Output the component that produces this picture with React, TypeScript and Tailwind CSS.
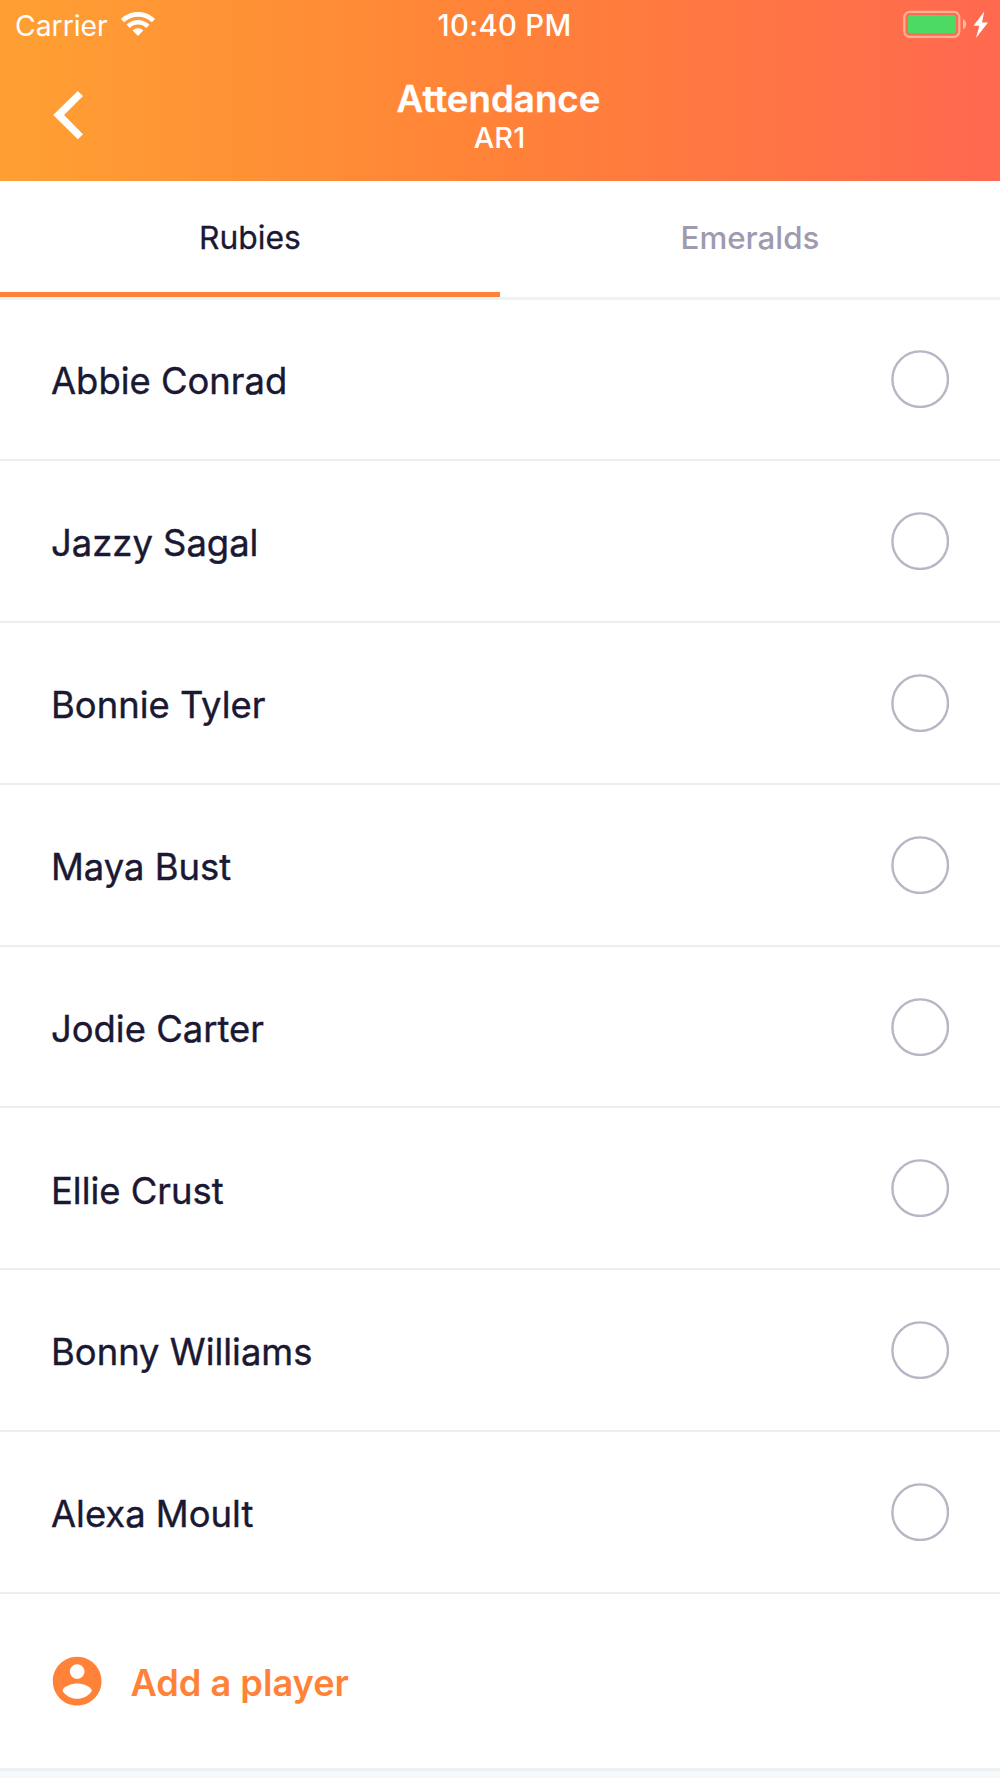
import { useState } from "react"

interface TabProps {
  label: string
  active: boolean
  onSelect: () => void
}

interface PlayerRowProps {
  name: string
  checked: boolean
  onToggle: () => void
}

const PLAYERS = [
  "Abbie Conrad",
  "Jazzy Sagal",
  "Bonnie Tyler",
  "Maya Bust",
  "Jodie Carter",
  "Ellie Crust",
  "Bonny Williams",
  "Alexa Moult",
]

const TEAMS = ["Rubies", "Emeralds"]

function WifiIcon() {
  return (
    <svg className="w-[34px] h-[24px]" viewBox="0 0 34 24" fill="white">
      <path d="M0 6.9C4.6 2.6 10.500 0 17 0s12.400 2.600 17 6.900L30.900 10.200C27.200 6.700 22.300 4.700 17 4.700S6.800 6.700 3.100 10.200z" />
      <path d="M5.500 12.500C8.500 9.600 12.600 7.900 17 7.900s8.500 1.700 11.500 4.600l-3.200 3.400C23.100 13.800 20.200 12.600 17 12.600s-6.100 1.200-8.300 3.300z" />
      <path d="M17 24l-5.300-5.500c1.300-1.500 3.200-2.300 5.300-2.300s4 .8 5.300 2.300z" />
    </svg>
  )
}

function BatteryIcon() {
  return (
    <svg className="w-[86px] h-[28px]" viewBox="0 0 86 28">
      <rect x="1.300" y="1.900" width="55" height="25" rx="5.500" fill="none" stroke="white" strokeOpacity="0.450" strokeWidth="2.200" />
      <rect x="5" y="5" width="48" height="18.500" rx="2.500" fill="#4cd964" />
      <path d="M60 9.300c4.200 1.700 4.200 8.300 0 10z" fill="white" fillOpacity="0.500" />
      <path d="M81.300 1.500L70.500 15.800h5.800L73 28 85 12.500h-6z" fill="white" />
    </svg>
  )
}

function StatusBar() {
  return (
    <div className="grid grid-cols-3 h-[50px] px-[14px] text-[29.3px] leading-[51px] text-white">
      <div className="flex items-start">
        <span className="w-[107px] pl-px text-[28.3px] leading-[52px]">Carrier</span>
        <span className="pt-[12px]">
          <WifiIcon />
        </span>
      </div>
      <span className="pl-[9px] text-center font-medium tracking-[0.3px]">10:40 PM</span>
      <div className="flex justify-end pt-[10px] -mr-[3px]">
        <BatteryIcon />
      </div>
    </div>
  )
}

function Header() {
  return (
    <header className="h-[181px] bg-linear-to-r/srgb from-[#ffa033] via-[#ff8238] to-[#ff6950]">
      <StatusBar />
      <div className="grid grid-cols-[1fr_auto_1fr] h-[131px]">
        <button className="flex items-start pl-[52px] pt-[40px]" aria-label="Back">
          <svg className="w-[32px] h-[50px]" viewBox="0 0 32 50" fill="white">
            <path d="M25.800 1L31 6 12 25l19 19.200-5.200 5L1.200 25z" />
          </svg>
        </button>
        <div className="flex flex-col items-center pt-[27px] pr-[3px] text-white">
          <h1 className="text-[36.700px] leading-[44px] font-semibold [-webkit-text-stroke:0.3px]">Attendance</h1>
          <p className="pl-[2px] text-[29px] leading-[34px] font-medium">AR1</p>
        </div>
        <div />
      </div>
    </header>
  )
}

function Tab({ label, active, onSelect }: TabProps) {
  return (
    <button
      onClick={onSelect}
      className={`h-[116px] pt-[3px] border-b-[5px] ${
        active
          ? "border-[#ff8238] text-[#1a1833] text-[31.800px] [-webkit-text-stroke:0.3px]"
          : "border-transparent text-[#9e9bb0] text-[31.300px] font-medium"
      }`}
    >
      {label}
    </button>
  )
}

function PlayerRow({ name, checked, onToggle }: PlayerRowProps) {
  return (
    <li className="h-[161.900px] border-b-2 border-[#e9eff2]">
      <button
        onClick={onToggle}
        className="flex w-full h-full items-center justify-between pl-[51px] pr-[51px] text-[36.400px] text-[#1a1833]"
      >
        <span className="pt-[5px] [-webkit-text-stroke:0.4px]">{name}</span>
        <svg className="size-[58px]" viewBox="0 0 58 58">
          <circle cx="29.200" cy="29.200" r="27.800" fill={checked ? "#ff8238" : "none"} stroke="#b8b5c4" strokeWidth="2.400" />
        </svg>
      </button>
    </li>
  )
}

function AddPlayer() {
  return (
    <button className="flex w-full h-[177px] items-center gap-[24px] pl-[48px] border-b-[3px] border-[#ebf0f3] text-[#ff8238]">
      <svg className="size-[58.400px]" viewBox="0 0 24 24" fill="currentColor">
        <path d="M12 2C6.480 2 2 6.480 2 12s4.480 10 10 10 10-4.480 10-10S17.520 2 12 2zm0 3c1.660 0 3 1.340 3 3s-1.340 3-3 3-3-1.340-3-3 1.340-3 3-3zm0 14.200c-2.500 0-4.710-1.280-6-3.220.03-1.990 4-3.080 6-3.080 1.990 0 5.970 1.090 6 3.080-1.290 1.940-3.500 3.220-6 3.220z" />
      </svg>
      <span className="pt-[4px] text-[36.200px] font-semibold">Add a player</span>
    </button>
  )
}

export default function App() {
  const [team, setTeam] = useState("Rubies")
  const [present, setPresent] = useState<string[]>([])

  const toggle = (name: string) =>
    setPresent((prev) => (prev.includes(name) ? prev.filter((p) => p !== name) : [...prev, name]))

  return (
    <div className="w-[1000px] h-[1778px] overflow-hidden bg-[#f5f9fc] font-['Inter',sans-serif]">
      <Header />
      <main className="bg-white">
        <div className="grid grid-cols-2 border-b-3 border-[#edf2f4]">
          {TEAMS.map((t) => (
            <Tab key={t} label={t} active={t === team} onSelect={() => setTeam(t)} />
          ))}
        </div>
        <ul className="-mt-px">
          {PLAYERS.map((name) => (
            <PlayerRow key={name} name={name} checked={present.includes(name)} onToggle={() => toggle(name)} />
          ))}
        </ul>
        <AddPlayer />
      </main>
    </div>
  )
}
